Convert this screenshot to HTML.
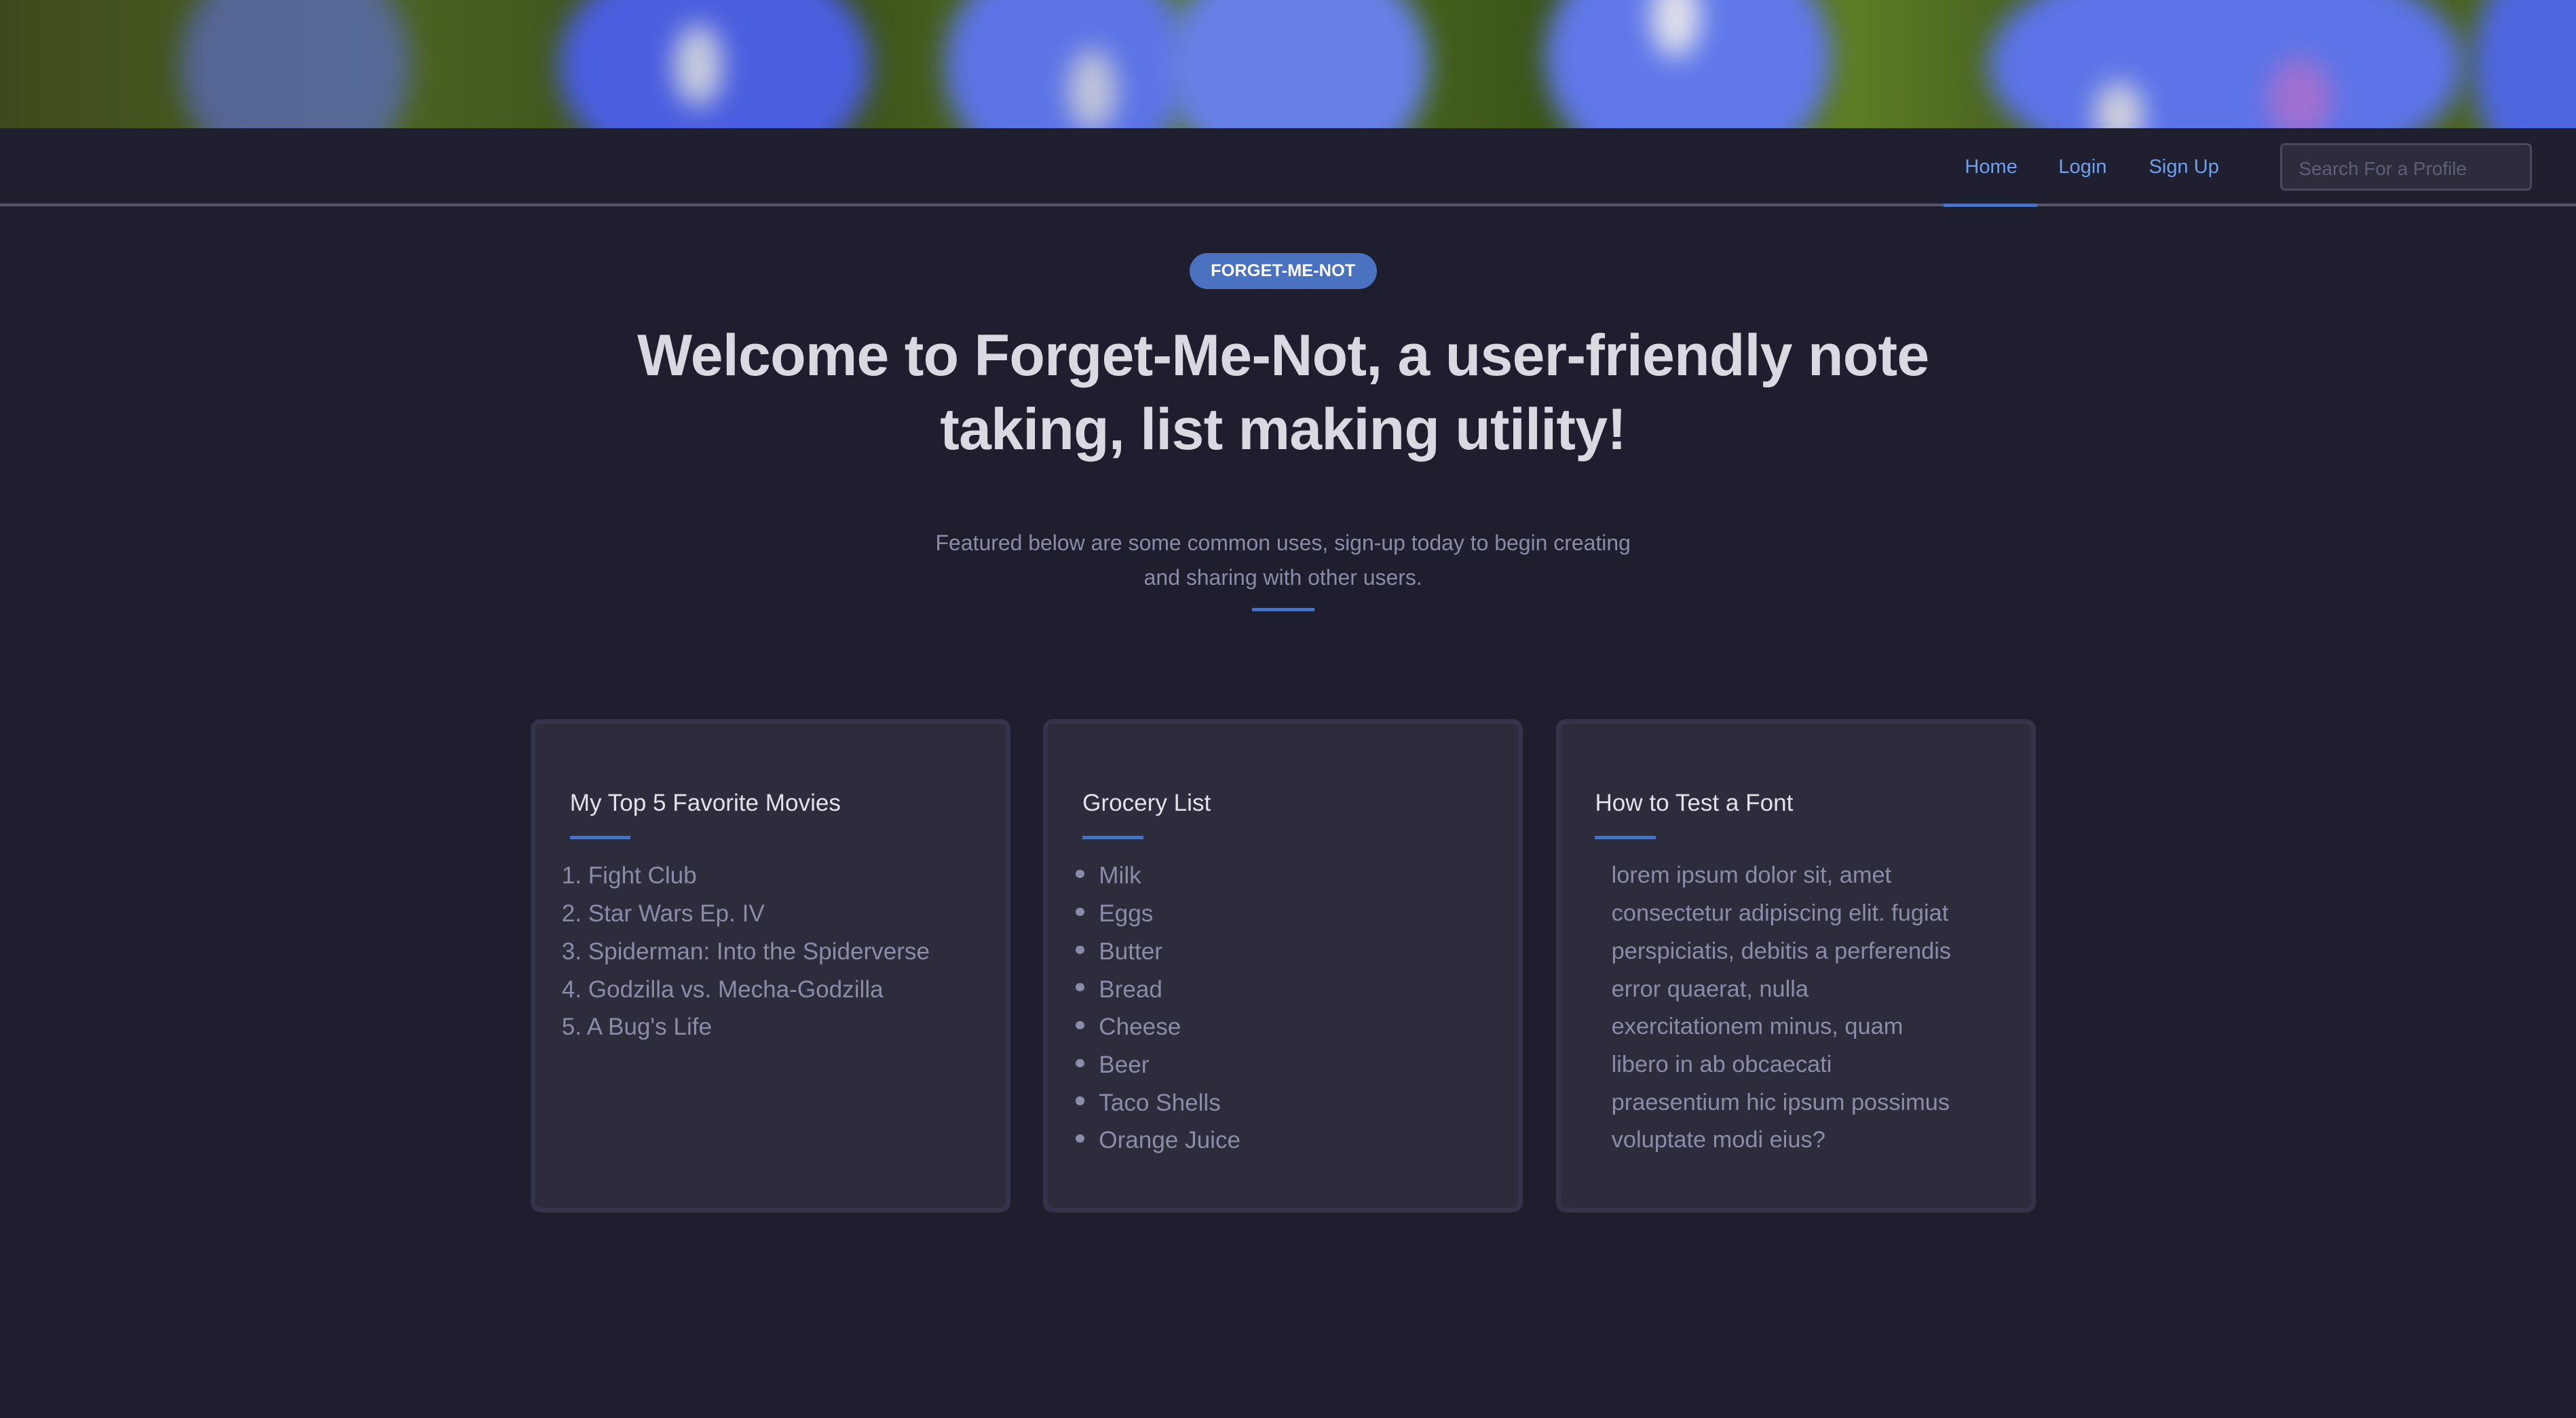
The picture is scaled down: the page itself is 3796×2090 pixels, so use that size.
<!DOCTYPE html>
<html><head><meta charset="utf-8"><style>
html,body{margin:0;padding:0;background:#1e1e2e;overflow:hidden}
body{width:3796px;height:2090px}
#w{zoom:2.42092;width:1568px;height:863.3px;position:relative;font-family:"Liberation Sans",sans-serif;overflow:hidden;background:#1e1e2e}
.ban{position:absolute;left:0;top:0;width:1568px;height:78px;overflow:hidden;background:linear-gradient(90deg,#3e4a1c,#4d6422 15%,#36481a 30%,#5a7a22 45%,#3a5418 60%,#5d7d24 72%,#33461a 85%,#55701f)}
.b{position:absolute;border-radius:50%;filter:blur(8px)}
.nav{position:absolute;top:78px;left:0;width:1568px;height:46px;background:#1f1f2f;border-bottom:2px solid #55556a}
.nav a{position:absolute;top:17px;font-size:12px;color:#6ea0f0;text-decoration:none}
.ul{position:absolute;left:1183px;top:124px;width:57px;height:2px;background:#4a72c0}
.srch{position:absolute;left:1388px;top:87px;width:153px;height:29px;box-sizing:border-box;border:1.5px solid #4a4a5e;border-radius:3px;background:#2c2c3c;color:#5e5f78;font-size:11.5px;padding:8px 10px}
.badge{position:absolute;left:724px;top:154px;width:114px;height:22px;border-radius:11px;background:#4a72c0;color:#fff;font-size:10.5px;font-weight:bold;text-align:center;line-height:22px}
h1{position:absolute;left:250px;width:1062px;top:194px;margin:0;text-align:center;font-size:35.5px;line-height:45px;color:#d9d9e2;font-weight:bold;letter-spacing:-0.3px}
.sub{position:absolute;left:460px;width:642px;top:320px;text-align:center;font-size:13.2px;line-height:21px;color:#8a8ca8}
.bl{position:absolute;left:762px;top:370px;width:38px;height:2px;background:#4a72c0}
.card{position:absolute;top:438px;width:292px;height:300px;box-sizing:border-box;border:3px solid #33344a;border-radius:6px;background:#2c2c3c}
.card h3{position:absolute;left:21px;top:40px;margin:0;font-size:14.5px;font-weight:normal;color:#e2e2ea}
.card .u{position:absolute;left:21px;top:68px;width:37px;height:2px;background:#4a72c0}
.card .l{position:absolute;top:81px;font-size:14.5px;line-height:23px;color:#8a8ca8;white-space:nowrap}
.dot{display:inline-block;width:5px;height:5px;border-radius:50%;background:#8a8ca8;margin-right:9px;vertical-align:middle;position:relative;top:-2px}
</style></head><body><div id="w">
<div class="ban">
<div class="b" style="left:110px;top:-30px;width:140px;height:140px;background:#5a6cc8;opacity:.7"></div>
<div class="b" style="left:340px;top:-30px;width:190px;height:140px;background:#4a5ee0"></div>
<div class="b" style="left:410px;top:15px;width:30px;height:50px;background:#c8ccdc"></div>
<div class="b" style="left:575px;top:-30px;width:150px;height:140px;background:#5c74e6"></div>
<div class="b" style="left:710px;top:-30px;width:160px;height:140px;background:#6680e8"></div>
<div class="b" style="left:650px;top:30px;width:30px;height:50px;background:#c0c4d8"></div>
<div class="b" style="left:940px;top:-40px;width:175px;height:150px;background:#6078ea"></div>
<div class="b" style="left:1005px;top:-15px;width:30px;height:50px;background:#e0e0ea"></div>
<div class="b" style="left:1210px;top:-30px;width:290px;height:140px;background:#5c74e8"></div>
<div class="b" style="left:1380px;top:35px;width:40px;height:50px;background:#a070d0"></div>
<div class="b" style="left:1275px;top:50px;width:30px;height:40px;background:#d0d0dc"></div>
<div class="b" style="left:1505px;top:-30px;width:100px;height:140px;background:#4e66e0"></div>
</div>
<div class="nav">
<a style="left:1196px">Home</a><a style="left:1253px">Login</a><a style="left:1308px">Sign Up</a>
</div>
<div class="ul"></div>
<div class="srch">Search For a Profile</div>
<div class="badge">FORGET-ME-NOT</div>
<h1>Welcome to Forget-Me-Not, a user-friendly note<br>taking, list making utility!</h1>
<div class="sub">Featured below are some common uses, sign-up today to begin creating<br>and sharing with other users.</div>
<div class="bl"></div>
<div class="card" style="left:323px"><h3>My Top 5 Favorite Movies</h3><div class="u"></div>
<div class="l" style="left:16px">1. Fight Club<br>2. Star Wars Ep. IV<br>3. Spiderman: Into the Spiderverse<br>4. Godzilla vs. Mecha-Godzilla<br>5. A Bug's Life</div></div>
<div class="card" style="left:635px"><h3>Grocery List</h3><div class="u"></div>
<div class="l" style="left:17px"><span class="dot"></span>Milk<br><span class="dot"></span>Eggs<br><span class="dot"></span>Butter<br><span class="dot"></span>Bread<br><span class="dot"></span>Cheese<br><span class="dot"></span>Beer<br><span class="dot"></span>Taco Shells<br><span class="dot"></span>Orange Juice</div></div>
<div class="card" style="left:947px"><h3>How to Test a Font</h3><div class="u"></div>
<div class="l" style="left:31px;font-size:14.2px">lorem ipsum dolor sit, amet<br>consectetur adipiscing elit. fugiat<br>perspiciatis, debitis a perferendis<br>error quaerat, nulla<br>exercitationem minus, quam<br>libero in ab obcaecati<br>praesentium hic ipsum possimus<br>voluptate modi eius?</div></div>
</div></body></html>
